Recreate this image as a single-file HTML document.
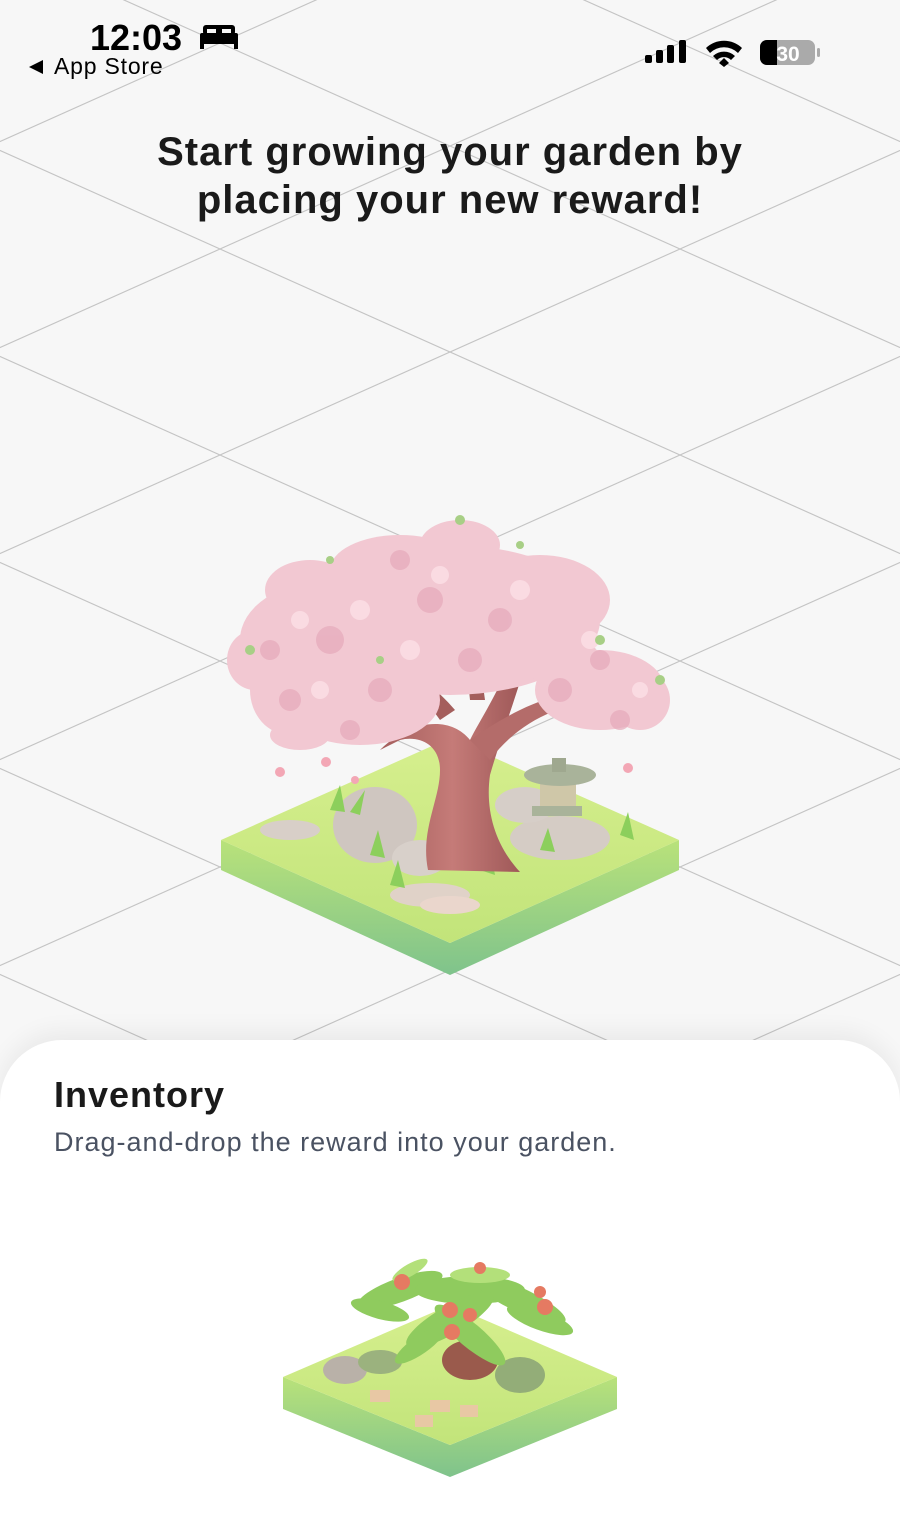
<!DOCTYPE html>
<html><head><meta charset="utf-8">
<style>
html,body{margin:0;padding:0;}
body{width:900px;height:1500px;overflow:hidden;background:#f7f7f7;position:relative;font-family:"Liberation Sans",sans-serif;}
svg.bg{position:absolute;left:0;top:0;}
.time{position:absolute;left:90px;top:17px;font-size:36px;font-weight:bold;color:#000;}
.back{position:absolute;left:54px;top:53px;font-size:23px;color:#000;letter-spacing:0.8px;}
.title{position:absolute;left:0;width:900px;top:128px;text-align:center;font-size:40px;font-weight:bold;color:#1a1a1a;line-height:48px;letter-spacing:1px;}
.sheet{position:absolute;left:0;top:1040px;width:900px;height:480px;background:#fff;border-radius:62px 62px 0 0;box-shadow:0 -8px 24px rgba(0,0,0,0.06);}
.inv{position:absolute;left:54px;top:1074px;font-size:36px;font-weight:bold;color:#1a1a1a;letter-spacing:1px;}
.sub{position:absolute;left:54px;top:1127px;font-size:27px;color:#4a5262;letter-spacing:1px;}
</style></head><body>
<svg class="bg" width="900" height="1500" viewBox="0 0 900 1500">
<defs>
<pattern id="g" x="220" y="146" width="460" height="206" patternUnits="userSpaceOnUse">
<path d="M0 103 L230 0 L460 103 L230 206 Z" fill="none" stroke="#c4c4c4" stroke-width="1.2"/>
</pattern>
<linearGradient id="side" x1="0" y1="0" x2="0" y2="1"><stop offset="0" stop-color="#b9e27a"/><stop offset="1" stop-color="#7fc38c"/></linearGradient>
<linearGradient id="top" x1="0" y1="0" x2="0" y2="1"><stop offset="0" stop-color="#d6ef8e"/><stop offset="1" stop-color="#c2e47a"/></linearGradient>
<linearGradient id="trunk" x1="0" y1="0" x2="1" y2="0"><stop offset="0" stop-color="#a45e5c"/><stop offset="0.5" stop-color="#c57b78"/><stop offset="1" stop-color="#9c5656"/></linearGradient>
</defs>
<rect width="900" height="1040" fill="url(#g)"/>
<polygon points="221,840 450,943 450,975 221,870" fill="url(#side)"/>
<polygon points="679,840 450,943 450,975 679,870" fill="url(#side)"/>
<polygon points="221,840 450,738 679,840 450,943" fill="url(#top)"/>
<ellipse cx="375" cy="825" rx="42" ry="38" fill="#cfc6c0"/>
<ellipse cx="420" cy="858" rx="28" ry="18" fill="#d8d0ca"/>
<ellipse cx="290" cy="830" rx="30" ry="10" fill="#d8cfc8"/>
<ellipse cx="560" cy="838" rx="50" ry="22" fill="#d5ccc5"/>
<ellipse cx="525" cy="805" rx="30" ry="18" fill="#d6cec8"/>
<ellipse cx="430" cy="895" rx="40" ry="12" fill="#e0d2c8"/>
<ellipse cx="450" cy="905" rx="30" ry="9" fill="#ead6cc"/>
<g fill="#8ccf5c">
<polygon points="330,810 340,785 345,812"/><polygon points="350,812 365,790 360,815"/><polygon points="370,855 378,830 385,858"/>
<polygon points="455,860 465,835 470,865"/><polygon points="620,835 628,812 634,840"/><polygon points="540,850 548,828 555,852"/>
<polygon points="390,885 398,860 405,888"/><polygon points="480,870 490,848 495,875"/>
</g>
<rect x="540" y="780" width="36" height="30" fill="#cfc7a8"/>
<ellipse cx="560" cy="775" rx="36" ry="11" fill="#a9b39a"/>
<rect x="552" y="758" width="14" height="14" fill="#9fa88f"/>
<rect x="532" y="806" width="50" height="10" fill="#a9b39a"/>
<path d="M428 870 C420 830 440 800 440 770 C440 745 420 735 400 740 L380 750 C410 720 450 715 470 740 C480 720 500 690 510 660 L525 665 C515 700 500 740 490 775 C485 810 495 845 520 872 Z" fill="url(#trunk)"/>
<path d="M470 740 C520 705 560 690 600 690 L600 700 C560 705 520 720 490 760 Z" fill="#b46c6a"/>
<path d="M440 720 C420 690 380 660 330 640 L335 630 C385 650 430 680 455 710 Z" fill="#a45e5c"/>
<path d="M470 700 C465 650 460 600 470 560 L480 562 C474 600 478 650 485 700 Z" fill="#a45e5c"/>
<g fill="#f2c8d2">
<ellipse cx="450" cy="620" rx="150" ry="75"/>
<ellipse cx="330" cy="640" rx="90" ry="60"/>
<ellipse cx="360" cy="700" rx="80" ry="45"/>
<ellipse cx="290" cy="690" rx="40" ry="45"/>
<ellipse cx="255" cy="660" rx="28" ry="30"/>
<ellipse cx="400" cy="570" rx="70" ry="35"/>
<ellipse cx="460" cy="545" rx="40" ry="25"/>
<ellipse cx="310" cy="590" rx="45" ry="30"/>
<ellipse cx="540" cy="600" rx="70" ry="45"/>
<ellipse cx="600" cy="690" rx="65" ry="40"/>
<ellipse cx="640" cy="700" rx="30" ry="30"/>
<ellipse cx="560" cy="660" rx="40" ry="25"/>
<ellipse cx="300" cy="735" rx="30" ry="15"/>
</g>
<g fill="#e6a9ba" opacity="0.7">
<circle cx="330" cy="640" r="14"/><circle cx="380" cy="690" r="12"/><circle cx="430" cy="600" r="13"/><circle cx="500" cy="620" r="12"/>
<circle cx="560" cy="690" r="12"/><circle cx="620" cy="720" r="10"/><circle cx="290" cy="700" r="11"/><circle cx="470" cy="660" r="12"/>
<circle cx="400" cy="560" r="10"/><circle cx="350" cy="730" r="10"/><circle cx="600" cy="660" r="10"/><circle cx="270" cy="650" r="10"/>
</g>
<g fill="#fadbe2">
<circle cx="300" cy="620" r="9"/><circle cx="360" cy="610" r="10"/><circle cx="440" cy="575" r="9"/><circle cx="520" cy="590" r="10"/>
<circle cx="590" cy="640" r="9"/><circle cx="640" cy="690" r="8"/><circle cx="410" cy="650" r="10"/><circle cx="320" cy="690" r="9"/>
</g>
<g fill="#a8cf86">
<circle cx="250" cy="650" r="5"/><circle cx="460" cy="520" r="5"/><circle cx="520" cy="545" r="4"/><circle cx="600" cy="640" r="5"/>
<circle cx="660" cy="680" r="5"/><circle cx="380" cy="660" r="4"/><circle cx="330" cy="560" r="4"/>
</g>
<g fill="#f3a7b5"><circle cx="280" cy="772" r="5"/><circle cx="326" cy="762" r="5"/><circle cx="628" cy="768" r="5"/><circle cx="355" cy="780" r="4"/></g>
<rect x="645" y="55" width="7" height="8" rx="2" fill="#000"/>
<rect x="656" y="50" width="7" height="13" rx="2" fill="#000"/>
<rect x="667" y="45" width="7" height="18" rx="2" fill="#000"/>
<rect x="679" y="40" width="7" height="23" rx="2" fill="#000"/>
<path d="M706 48 A26 26 0 0 1 742 48 L738 53 A20 20 0 0 0 710 53 Z" fill="#000"/>
<path d="M713 56 A16 16 0 0 1 735 56 L731 60 A10 10 0 0 0 717 60 Z" fill="#000"/>
<path d="M719 63 L724 58 L729 63 L724 67 Z" fill="#000"/>
<rect x="760" y="40" width="55" height="25" rx="7" fill="#aaaaaa"/>
<path d="M767 40 L777 40 L777 65 L767 65 A7 7 0 0 1 760 58 L760 47 A7 7 0 0 1 767 40 Z" fill="#000"/>
<rect x="817" y="48" width="3" height="9" rx="1.5" fill="#aaa"/>
<text x="788" y="61" font-family="Liberation Sans" font-weight="bold" font-size="21" fill="#fff" text-anchor="middle">30</text>
<rect x="200" y="33" width="38" height="11" rx="2" fill="#000"/>
<rect x="203" y="25" width="32" height="10" rx="3" fill="#000"/>
<rect x="207" y="29" width="9" height="4" fill="#f7f7f7"/><rect x="222" y="29" width="9" height="4" fill="#f7f7f7"/>
<rect x="200" y="42" width="4" height="7" fill="#000"/><rect x="234" y="42" width="4" height="7" fill="#000"/>
<polygon points="29,67 43,60 43,74" fill="#000"/>
</svg>
<div class="time">12:03</div>
<div class="back">App Store</div>
<div class="title">Start growing your garden by<br>placing your new reward!</div>
<div class="sheet"></div>
<svg class="bg" width="900" height="1500" viewBox="0 0 900 1500">
<defs>
<linearGradient id="side2" x1="0" y1="0" x2="0" y2="1"><stop offset="0" stop-color="#b9e27a"/><stop offset="1" stop-color="#7fc38c"/></linearGradient>
<linearGradient id="top2" x1="0" y1="0" x2="0" y2="1"><stop offset="0" stop-color="#d6ef8e"/><stop offset="1" stop-color="#c2e47a"/></linearGradient>
</defs>
<polygon points="283,1377 450,1445 450,1477 283,1409" fill="url(#side2)"/>
<polygon points="617,1377 450,1445 450,1477 617,1409" fill="url(#side2)"/>
<polygon points="283,1377 450,1305 617,1377 450,1445" fill="url(#top2)"/>
<ellipse cx="345" cy="1370" rx="22" ry="14" fill="#b9b1a8"/>
<ellipse cx="520" cy="1375" rx="25" ry="18" fill="#93ad78"/>
<ellipse cx="380" cy="1362" rx="22" ry="12" fill="#9bb27e"/>
<ellipse cx="470" cy="1360" rx="28" ry="20" fill="#9a5a4c"/>
<g fill="#e8c8a4"><rect x="370" y="1390" width="20" height="12"/><rect x="430" y="1400" width="20" height="12"/><rect x="415" y="1415" width="18" height="12"/><rect x="460" y="1405" width="18" height="12"/></g>
<g fill="#8fcb5e">
<ellipse cx="400" cy="1290" rx="45" ry="12" transform="rotate(-20 400 1290)"/>
<ellipse cx="470" cy="1290" rx="55" ry="14"/>
<ellipse cx="520" cy="1300" rx="50" ry="12" transform="rotate(25 520 1300)"/>
<ellipse cx="450" cy="1320" rx="50" ry="14" transform="rotate(-30 450 1320)"/>
<ellipse cx="470" cy="1335" rx="45" ry="12" transform="rotate(40 470 1335)"/>
<ellipse cx="540" cy="1320" rx="35" ry="10" transform="rotate(20 540 1320)"/>
<ellipse cx="380" cy="1310" rx="30" ry="9" transform="rotate(15 380 1310)"/>
<ellipse cx="420" cy="1345" rx="30" ry="9" transform="rotate(-35 420 1345)"/>
</g>
<g fill="#b3e07a"><ellipse cx="480" cy="1275" rx="30" ry="8"/><ellipse cx="410" cy="1270" rx="20" ry="6" transform="rotate(-30 410 1270)"/></g>
<g fill="#e57a62">
<circle cx="402" cy="1282" r="8"/><circle cx="450" cy="1310" r="8"/><circle cx="470" cy="1315" r="7"/><circle cx="452" cy="1332" r="8"/>
<circle cx="545" cy="1307" r="8"/><circle cx="540" cy="1292" r="6"/><circle cx="480" cy="1268" r="6"/>
</g>
</svg>
<div class="inv">Inventory</div>
<div class="sub">Drag-and-drop the reward into your garden.</div>
</body></html>
